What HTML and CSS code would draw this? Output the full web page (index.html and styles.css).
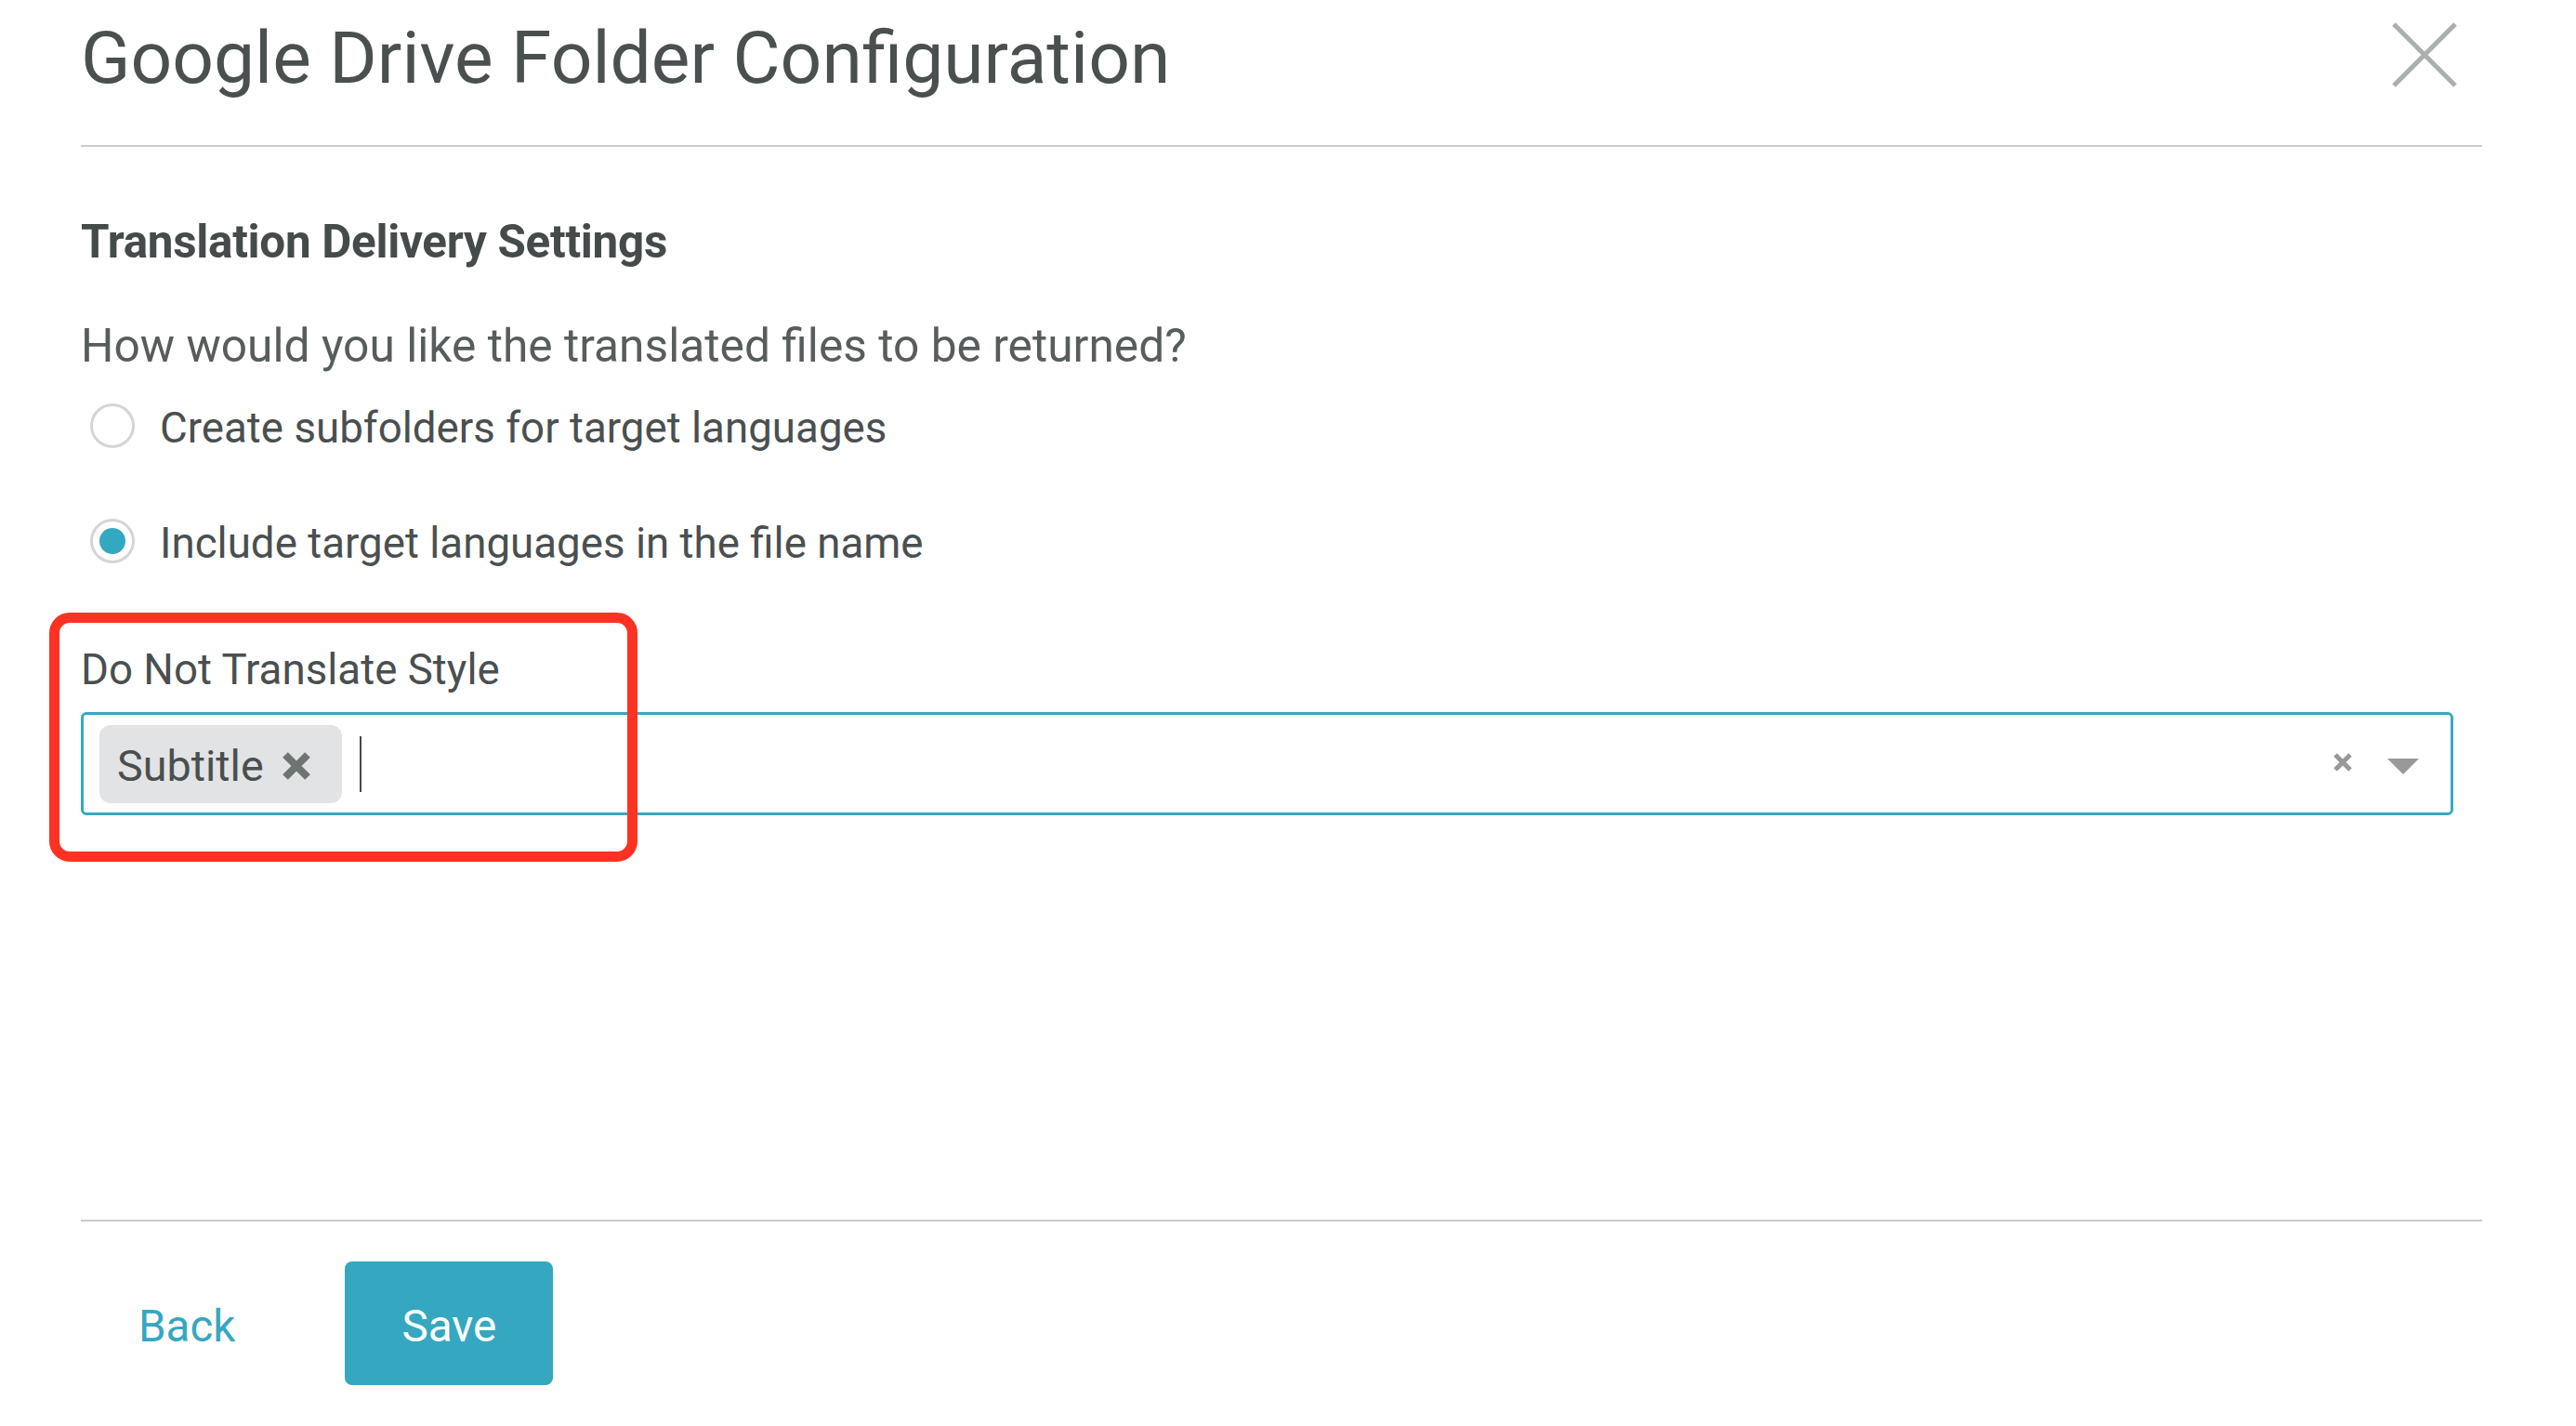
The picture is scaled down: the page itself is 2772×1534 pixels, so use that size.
FILE: index.html
```html
<!DOCTYPE html>
<html lang="en">
<head>
<meta charset="utf-8">
<title>Google Drive Folder Configuration</title>
<link rel="stylesheet" href="styles.css">
</head>
<body>
<div class="modal">
  <header class="modal-header">
    <h1 class="modal-title">Google Drive Folder Configuration</h1>
    <button class="close-btn" aria-label="Close">
      <svg width="70" height="70" viewBox="0 0 70 70"><path d="M2 2 L68 68 M68 2 L2 68" stroke="#a9b0ae" stroke-width="5" fill="none"/></svg>
    </button>
  </header>

  <main class="modal-body">
    <h2 class="section-title">Translation Delivery Settings</h2>
    <p class="question">How would you like the translated files to be returned?</p>

    <label class="radio-row">
      <span class="radio"></span>
      <span class="radio-label">Create subfolders for target languages</span>
    </label>
    <label class="radio-row second">
      <span class="radio checked"><span class="dot"></span></span>
      <span class="radio-label">Include target languages in the file name</span>
    </label>

    <div class="field">
      <div class="field-label">Do Not Translate Style</div>
      <div class="select">
        <div class="tag">
          <span class="tag-text">Subtitle</span>
          <svg class="tag-x" width="32" height="32" viewBox="0 0 32 32"><path d="M4 4 L28 28 M28 4 L4 28" stroke="#6e7472" stroke-width="8" fill="none"/></svg>
        </div>
        <span class="caret"></span>
        <div class="select-tools">
          <svg class="clear" width="22" height="22" viewBox="0 0 22 22"><path d="M3 3 L19 19 M19 3 L3 19" stroke="#999999" stroke-width="5" fill="none"/></svg>
          <svg class="arrow" width="34" height="17" viewBox="0 0 34 17"><path d="M0 0 H34 L17 17 Z" fill="#999999"/></svg>
        </div>
      </div>
      <div class="highlight"></div>
    </div>
  </main>

  <footer class="modal-footer">
    <button class="btn-link">Back</button>
    <button class="btn-primary">Save</button>
  </footer>
</div>
</body>
</html>
```
FILE: styles.css
```css
* { box-sizing: border-box; }

html, body {
  margin: 0;
  padding: 0;
  background: #ffffff;
}

body {
  font-family: Roboto, "Liberation Sans", sans-serif;
  color: #4a4f4f;
}

.modal {
  padding: 0 101px 0 87px;
}

.modal-header {
  display: flex;
  justify-content: space-between;
  align-items: flex-start;
  padding-top: 23px;
  padding-bottom: 54px;
  border-bottom: 2px solid #cacaca;
}

.modal-title {
  margin: 0;
  font-size: 78.5px;
  line-height: 1;
  font-weight: 400;
  color: #4a4f4f;
}

.close-btn {
  border: 0;
  background: none;
  padding: 0;
  margin: 1px 27px 0 0;
  width: 70px;
  height: 70px;
  cursor: pointer;
}

.close-btn svg { display: block; }

.modal-body {
  padding-top: 78px;
  height: 1154px;
}

.section-title {
  margin: 0;
  font-size: 49.4px;
  line-height: 1;
  font-weight: 700;
  letter-spacing: -0.3px;
  color: #454a4a;
}

.question {
  margin: 63px 0 0 0;
  font-size: 49.7px;
  line-height: 1;
  color: #575c5c;
}

.radio-row {
  display: flex;
  align-items: center;
  margin-top: 36px;
  padding-left: 10px;
  height: 48px;
}

.radio-row.second { margin-top: 76px; }

.radio {
  width: 48px;
  height: 48px;
  border: 3.5px solid #d3d6d5;
  border-radius: 50%;
  display: flex;
  align-items: center;
  justify-content: center;
  flex: none;
}

.dot {
  width: 28px;
  height: 28px;
  border-radius: 50%;
  background: #33a8c1;
}

.radio-label {
  margin-left: 27px;
  margin-top: 7px;
  font-size: 45.7px;
  line-height: 1;
  color: #4a4f4f;
}

.field {
  position: relative;
  margin-top: 90px;
}

.field-label {
  font-size: 45.7px;
  line-height: 1;
  padding-top: 2px;
  color: #4a4f4f;
}

.select {
  margin-top: 23px;
  width: 2553px;
  height: 111px;
  border: 3px solid #36a9c0;
  border-radius: 6px;
  display: flex;
  align-items: center;
  padding: 0 34px 0 17px;
}

.tag {
  display: flex;
  align-items: center;
  height: 84px;
  width: 261px;
  padding: 0 0 0 19px;
  background: #e2e3e5;
  border-radius: 12px;
}

.tag-text {
  font-size: 46.7px;
  line-height: 1;
  margin-top: 5px;
  color: #4a4f4f;
}

.tag-x {
  display: block;
  margin-left: 19px;
  margin-top: 4px;
}

.caret {
  width: 2px;
  height: 60px;
  margin-left: 19px;
  background: #444848;
}

.select-tools {
  margin-left: auto;
  display: flex;
  align-items: center;
  gap: 37px;
}

.select-tools .clear { display: block; margin-top: -3px; }
.select-tools .arrow { display: block; margin-top: 5px; }

.highlight {
  position: absolute;
  left: -34px;
  top: -37px;
  width: 633px;
  height: 268px;
  border: 11px solid #fd3222;
  border-radius: 22px;
  pointer-events: none;
}

.modal-footer {
  border-top: 2px solid #cacaca;
  display: flex;
  align-items: flex-start;
  padding-top: 43px;
}

.btn-link {
  border: 0;
  background: none;
  font-family: Roboto, "Liberation Sans", sans-serif;
  font-size: 47.5px;
  line-height: 1;
  color: #35a7c0;
  padding: 10px 62px 0;
  height: 133px;
  cursor: pointer;
}

.btn-primary {
  margin-left: 56px;
  border: 0;
  border-radius: 8px;
  background: #35a7c0;
  color: #ffffff;
  font-family: Roboto, "Liberation Sans", sans-serif;
  font-size: 47.7px;
  line-height: 1;
  width: 224px;
  height: 133px;
  padding: 10px 0 0;
  cursor: pointer;
}
```
